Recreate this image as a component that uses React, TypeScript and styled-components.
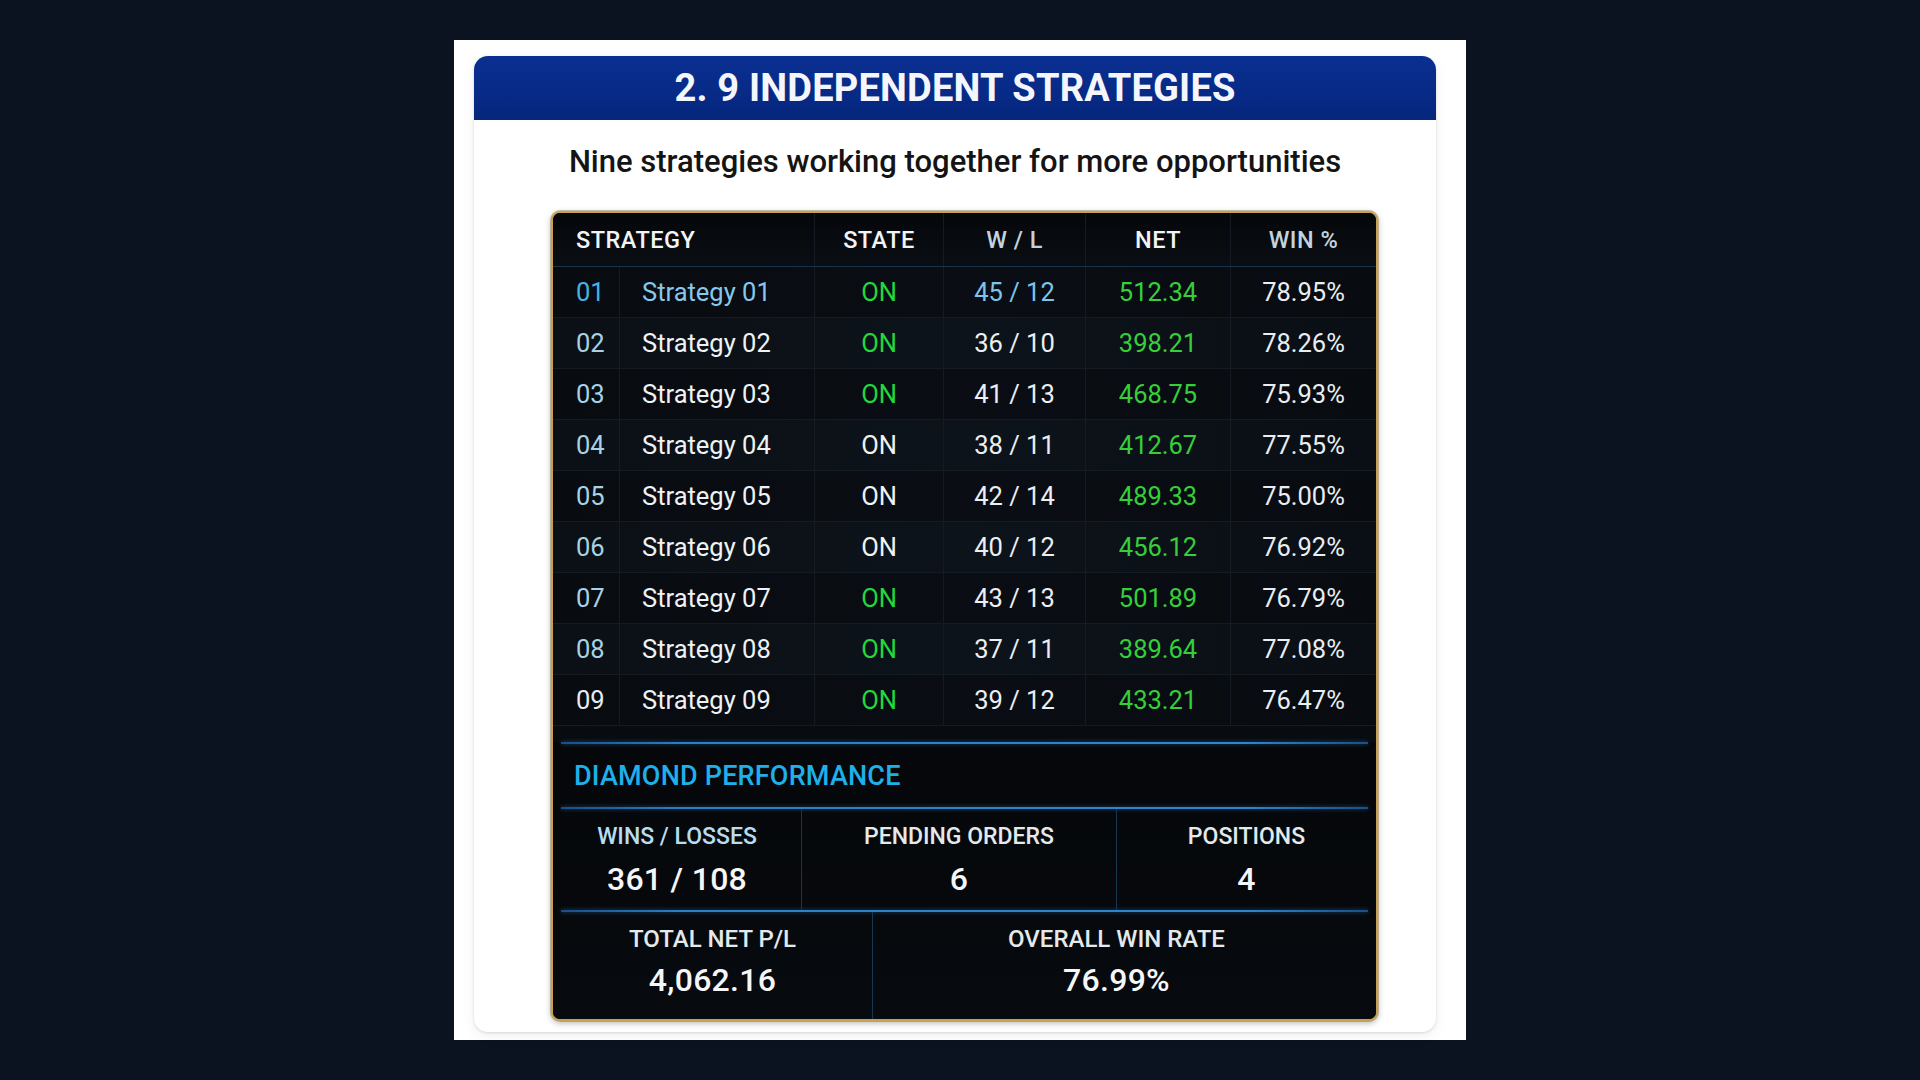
import styled, {createGlobalStyle} from "styled-components";

const GlobalStyle = createGlobalStyle`
  html, body {
    margin: 0;
    padding: 0;
    background: #0b1220;
  }
  body {
    font-family: Roboto, "Liberation Sans", Arial, sans-serif;
  }
`;

const Page = styled.div`
  width: 1920px;
  height: 1080px;
  display: flex;
  justify-content: center;
  align-items: flex-start;
  padding-top: 40px;
  box-sizing: border-box;
  background: #0b1220;
`;

const Sheet = styled.div`
  width: 1012px;
  height: 1000px;
  background: #ffffff;
  padding: 16px 30px 8px 20px;
  box-sizing: border-box;
`;

const Card = styled.div`
  width: 962px;
  height: 976px;
  border-radius: 14px;
  background: #ffffff;
  box-shadow: 0 1px 3px rgba(0, 0, 0, 0.12), 0 4px 14px rgba(0, 0, 0, 0.06);
  display: flex;
  flex-direction: column;
`;

const Banner = styled.div`
  height: 64px;
  border-radius: 14px 14px 0 0;
  background: linear-gradient(180deg, #0a2f91 0%, #072a86 60%, #06267c 100%);
  display: flex;
  align-items: center;
  justify-content: center;
  color: #f4f6fb;
  font-size: 38px;
  font-weight: 700;
  letter-spacing: 0.2px;
`;

const Subtitle = styled.div`
  padding-top: 26px;
  line-height: 32px;
  text-align: center;
  font-size: 31px;
  font-weight: 500;
  color: #141414;
`;

const Board = styled.div`
  margin: 33px 0 0 77px;
  width: 827px;
  box-sizing: border-box;
  border: 2px solid #c9a14e;
  border-radius: 9px;
  background: #080b10;
  overflow: hidden;
  box-shadow: 0 0 0 1px rgba(120, 90, 30, 0.35), 0 2px 6px rgba(0, 0, 0, 0.3);
`;

const cols = "67px 195px 129px 142px 145px 1fr";

const HeadRow = styled.div`
  display: grid;
  grid-template-columns: 262px 129px 142px 145px 1fr;
  height: 54px;
  background: linear-gradient(180deg, #05070a 0%, #0a0e14 100%);
  border-bottom: 1px solid #17324a;
  box-sizing: border-box;
`;

const HeadCell = styled.div<{$left?: boolean; $tint?: boolean}>`
  display: flex;
  align-items: center;
  justify-content: ${(p) => (p.$left ? "flex-start" : "center")};
  padding-left: ${(p) => (p.$left ? "23px" : "0")};
  font-size: 23.5px;
  font-weight: 500;
  letter-spacing: 0.5px;
  color: ${(p) => (p.$tint ? "#c3d3de" : "#f2f4f6")};
  border-right: 1px solid #141b24;
  &:last-child {
    border-right: none;
  }
`;

const Row = styled.div<{$odd: boolean}>`
  display: grid;
  grid-template-columns: ${cols};
  height: 51px;
  background: ${(p) =>
    p.$odd
      ? "linear-gradient(90deg, #0b1016 0%, #0d131a 50%, #0a0f15 100%)"
      : "linear-gradient(90deg, #080b10 0%, #0a0e14 50%, #080b10 100%)"};
  border-bottom: 1px solid #141b23;
  box-sizing: border-box;
`;

const Cell = styled.div<{$color: string; $left?: boolean; $pad?: number}>`
  display: flex;
  align-items: center;
  justify-content: ${(p) => (p.$left ? "flex-start" : "center")};
  padding-left: ${(p) => (p.$pad ? `${p.$pad}px` : "0")};
  font-size: 25.5px;
  font-weight: 400;
  color: ${(p) => p.$color};
  border-right: 1px solid #141b24;
  &:last-child {
    border-right: none;
  }
`;

const Spacer = styled.div`
  height: 16px;
  background: #080b10;
`;

const GlowLine = styled.div<{$inset: number}>`
  height: 2px;
  margin: 0 ${(p) => p.$inset}px 0 ${(p) => p.$inset}px;
  background: linear-gradient(90deg, #1a4f86 0%, #2b7fc4 15%, #2f86cc 85%, #1a4f86 100%);
  box-shadow: 0 0 4px rgba(50, 140, 220, 0.55);
`;

const Section = styled.div`
  background: linear-gradient(180deg, #05070a 0%, #070a0e 100%);
`;

const SectionTitle = styled.div`
  height: 63px;
  display: flex;
  align-items: center;
  padding-left: 21px;
  font-size: 27px;
  font-weight: 500;
  color: #1fb0ea;
  letter-spacing: 0.2px;
`;

const StatGrid = styled.div<{$template: string; $height: number}>`
  display: grid;
  grid-template-columns: ${(p) => p.$template};
  height: ${(p) => p.$height}px;
`;

const Stat = styled.div<{$top: number; $right?: number}>`
  display: flex;
  flex-direction: column;
  align-items: center;
  padding-top: ${(p) => p.$top}px;
  padding-right: ${(p) => p.$right || 0}px;
  border-right: 1px solid #173650;
  &:last-child {
    border-right: none;
  }
`;

const StatLabel = styled.div<{$color?: string; $size: number}>`
  line-height: 24px;
  font-size: ${(p) => p.$size}px;
  font-weight: 500;
  color: ${(p) => p.$color || "#e4e9ec"};
`;

const StatValue = styled.div<{$gap: number}>`
  margin-top: ${(p) => p.$gap}px;
  line-height: 37px;
  font-size: 32px;
  font-weight: 500;
  color: #f4f6f8;
  letter-spacing: 0.3px;
`;

type Strat = {
  id: string;
  wl: string;
  net: string;
  win: string;
  on: boolean;
};

const rows: Strat[] = [
  {id: "01", wl: "45 / 12", net: "512.34", win: "78.95%", on: true},
  {id: "02", wl: "36 / 10", net: "398.21", win: "78.26%", on: true},
  {id: "03", wl: "41 / 13", net: "468.75", win: "75.93%", on: true},
  {id: "04", wl: "38 / 11", net: "412.67", win: "77.55%", on: false},
  {id: "05", wl: "42 / 14", net: "489.33", win: "75.00%", on: false},
  {id: "06", wl: "40 / 12", net: "456.12", win: "76.92%", on: false},
  {id: "07", wl: "43 / 13", net: "501.89", win: "76.79%", on: true},
  {id: "08", wl: "37 / 11", net: "389.64", win: "77.08%", on: true},
  {id: "09", wl: "39 / 12", net: "433.21", win: "76.47%", on: true},
];

function App() {
  return (
    <Page>
      <GlobalStyle />
      <Sheet>
        <Card>
          <Banner>2. 9 INDEPENDENT STRATEGIES</Banner>
          <Subtitle>Nine strategies working together for more opportunities</Subtitle>
          <Board>
            <HeadRow>
              <HeadCell $left>STRATEGY</HeadCell>
              <HeadCell>STATE</HeadCell>
              <HeadCell $tint>W / L</HeadCell>
              <HeadCell>NET</HeadCell>
              <HeadCell $tint>WIN %</HeadCell>
            </HeadRow>
            {rows.map((r, i) => {
              const first = i === 0;
              return (
                <Row key={r.id} $odd={i % 2 === 1}>
                  <Cell $left $pad={23} $color={first ? "#45b4e4" : i === 8 ? "#e6ecef" : "#a6d2e6"}>
                    {r.id}
                  </Cell>
                  <Cell $left $pad={22} $color={first ? "#86c8ec" : "#eef2f4"}>
                    Strategy {r.id}
                  </Cell>
                  <Cell $color={r.on ? "#22d83c" : "#f0f2f3"}>ON</Cell>
                  <Cell $color={first ? "#7cc4ea" : "#eceff1"}>{r.wl}</Cell>
                  <Cell $color="#36cf3a">{r.net}</Cell>
                  <Cell $color="#e8eef2">{r.win}</Cell>
                </Row>
              );
            })}
            <Spacer />
            <Section>
              <GlowLine $inset={8} />
              <SectionTitle>DIAMOND PERFORMANCE</SectionTitle>
              <GlowLine $inset={8} />
              <StatGrid $template="249px 315px 1fr" $height={101}>
                <Stat $top={16}>
                  <StatLabel $size={23} $color="#b6dcf0">WINS / LOSSES</StatLabel>
                  <StatValue $gap={12}>361 / 108</StatValue>
                </Stat>
                <Stat $top={16}>
                  <StatLabel $size={23}>PENDING ORDERS</StatLabel>
                  <StatValue $gap={12}>6</StatValue>
                </Stat>
                <Stat $top={16}>
                  <StatLabel $size={23}>POSITIONS</StatLabel>
                  <StatValue $gap={12}>4</StatValue>
                </Stat>
              </StatGrid>
              <GlowLine $inset={8} />
              <StatGrid $template="320px 1fr" $height={107}>
                <Stat $top={15}>
                  <StatLabel $size={24}>TOTAL NET P/L</StatLabel>
                  <StatValue $gap={11}>4,062.16</StatValue>
                </Stat>
                <Stat $top={15} $right={16}>
                  <StatLabel $size={24}>OVERALL WIN RATE</StatLabel>
                  <StatValue $gap={11}>76.99%</StatValue>
                </Stat>
              </StatGrid>
            </Section>
          </Board>
        </Card>
      </Sheet>
    </Page>
  );
}

export default App;
